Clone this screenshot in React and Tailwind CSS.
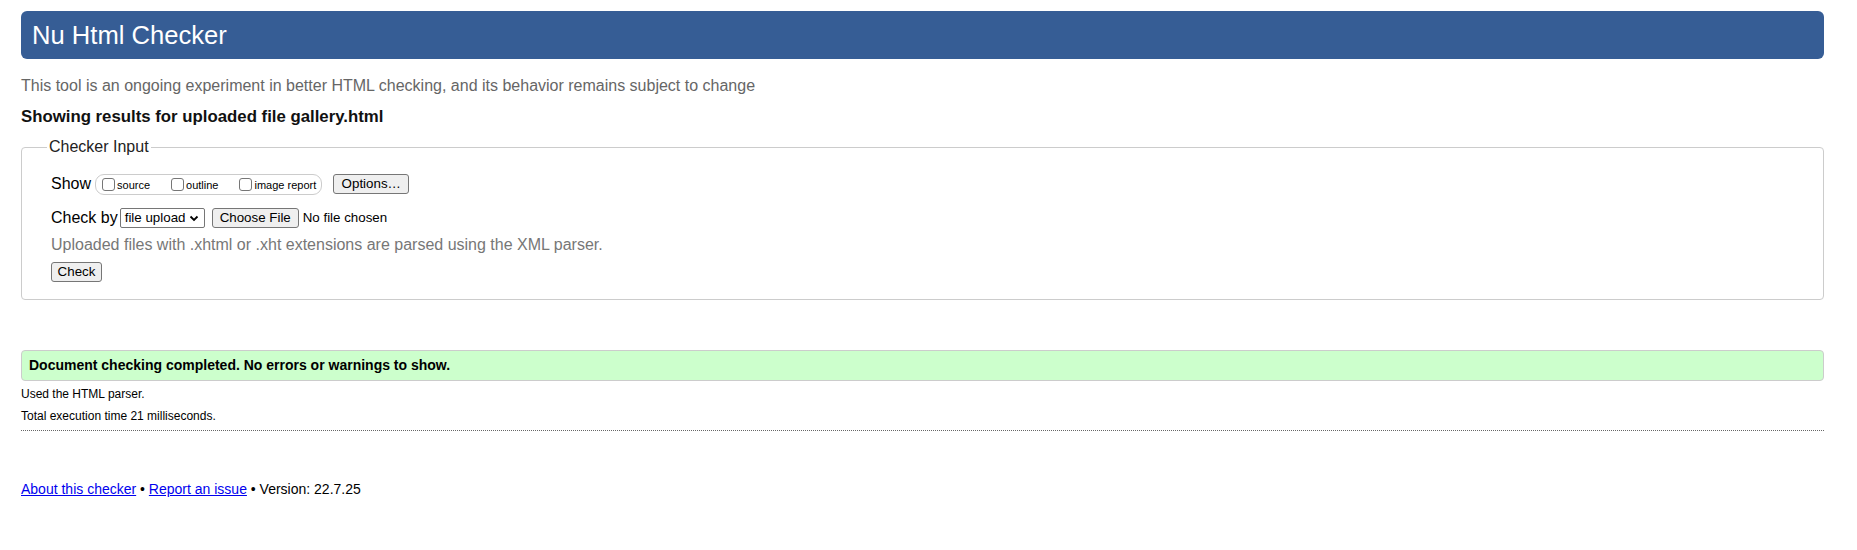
export default function App() {
  const btn =
    "inline-flex items-center justify-center h-[20px] px-[6px] text-[13.33px] bg-[#efefef] border border-[#767676] rounded-[3px] text-black leading-none";
  return (
    <div className="min-h-[550px] bg-white text-black pl-[21px] pr-[33px] pt-[11px] font-['Liberation_Sans',Arial,sans-serif]">
      <h1 className="h-[48px] rounded-[6px] bg-[#365d95] text-white text-[25.6px] leading-[48px] pl-[11px] font-normal">
        Nu Html Checker
      </h1>
      <p className="mt-[18px] text-[16px] leading-[18px] text-[#666]">
        This tool is an ongoing experiment in better HTML checking, and its behavior remains subject to change
      </p>
      <p className="mt-[12px] text-[16.8px] leading-[20px] font-bold text-[#111]">
        Showing results for uploaded file gallery.html
      </p>
      <fieldset className="mt-[11px] border border-[#cccccc] rounded-[4px] pl-[29px] pb-[17px]">
        <legend className="-ml-[4px] px-[2px] text-[16px] leading-[18px] text-[#222]">Checker Input</legend>
        <div className="mt-[17px] flex items-center h-[22px]">
          <span className="text-[16px] leading-[18px] mr-[4px]">Show</span>
          <span className="flex items-center h-[21px] border border-[#cccccc] rounded-[9px] pl-[6px] pr-[5px]">
            <span className="flex items-center">
              <span className="w-[13px] h-[13px] border border-[#767676] rounded-[3px] bg-white mr-[2px]" />
              <span className="text-[11px] leading-[13px] mt-[3px]">source</span>
            </span>
            <span className="flex items-center ml-[21px]">
              <span className="w-[13px] h-[13px] border border-[#767676] rounded-[3px] bg-white mr-[2px]" />
              <span className="text-[11px] leading-[13px] mt-[3px]">outline</span>
            </span>
            <span className="flex items-center ml-[21px]">
              <span className="w-[13px] h-[13px] border border-[#767676] rounded-[3px] bg-white mr-[2px]" />
              <span className="text-[11px] leading-[13px] mt-[3px]">image report</span>
            </span>
          </span>
          <span className={btn + " ml-[11px] w-[76px]"}>Options…</span>
        </div>
        <div className="mt-[12px] flex items-center h-[22px]">
          <span className="text-[16px] leading-[18px] mr-[2px]">Check by</span>
          <span className="flex items-center h-[20px] w-[85px] border border-[#767676] rounded-[2px] pl-[4px] text-[13.33px] leading-none">
            file upload
            <svg className="ml-[4px]" width="10" height="7" viewBox="0 0 10 7">
              <path d="M1.5 1.5 L5 5 L8.5 1.5" fill="none" stroke="#000" strokeWidth="1.8" />
            </svg>
          </span>
          <span className={btn + " ml-[7px] w-[87px]"}>Choose File</span>
          <span className="ml-[4px] text-[13.33px]">No file chosen</span>
        </div>
        <p className="mt-[7px] text-[16px] leading-[18px] text-[#777]">
          Uploaded files with .xhtml or .xht extensions are parsed using the XML parser.
        </p>
        <div className="mt-[8px] flex">
          <span className={btn + " w-[51px]"}>Check</span>
        </div>
      </fieldset>
      <div className="mt-[50px] h-[31px] flex items-center bg-[#ccffcc] border border-[#cccccc] rounded-[4px] pl-[7px] text-[14px] font-bold">
        Document checking completed. No errors or warnings to show.
      </div>
      <p className="mt-[6px] text-[12px] leading-[14px]">Used the HTML parser.</p>
      <p className="mt-[8px] text-[12px] leading-[14px]">Total execution time 21 milliseconds.</p>
      <div className="mt-[7px] border-b border-dotted border-[#666]" />
      <p className="mt-[50px] text-[14px] leading-[16px]">
        <a href="#" className="text-[#0000ee] underline">About this checker</a>
        {" • "}
        <a href="#" className="text-[#0000ee] underline">Report an issue</a>
        {" • Version: 22.7.25"}
      </p>
    </div>
  );
}
